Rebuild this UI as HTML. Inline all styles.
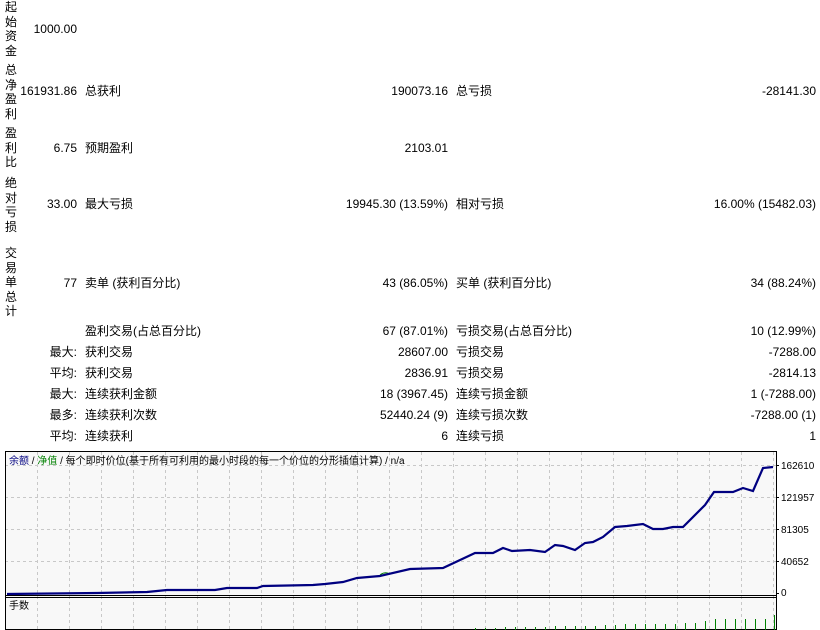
<!DOCTYPE html>
<html><head><meta charset="utf-8"><style>
body{margin:0;width:820px;height:630px;background:#fff;position:relative;overflow:hidden;font-family:"Liberation Sans","Noto Sans CJK SC",sans-serif;font-size:12px;color:#000}
.a{position:absolute;white-space:nowrap;line-height:14px}
.r{text-align:right}
.v{position:absolute;left:5px;width:14px;line-height:14.5px;font-size:12px}
</style></head><body>
<div class="v" style="top:0">起<br>始<br>资<br>金</div>
<div class="v" style="top:63px">总<br>净<br>盈<br>利</div>
<div class="v" style="top:126px">盈<br>利<br>比</div>
<div class="v" style="top:176px">绝<br>对<br>亏<br>损</div>
<div class="v" style="top:246px">交<br>易<br>单<br>总<br>计</div>

<div class="a r" style="right:743px;top:22px">1000.00</div>

<div class="a r" style="right:743px;top:84px">161931.86</div>
<div class="a" style="left:85px;top:84px">总获利</div>
<div class="a r" style="right:372px;top:84px">190073.16</div>
<div class="a" style="left:456px;top:84px">总亏损</div>
<div class="a r" style="right:4px;top:84px">-28141.30</div>

<div class="a r" style="right:743px;top:141px">6.75</div>
<div class="a" style="left:85px;top:141px">预期盈利</div>
<div class="a r" style="right:372px;top:141px">2103.01</div>

<div class="a r" style="right:743px;top:197px">33.00</div>
<div class="a" style="left:85px;top:197px">最大亏损</div>
<div class="a r" style="right:372px;top:197px">19945.30 (13.59%)</div>
<div class="a" style="left:456px;top:197px">相对亏损</div>
<div class="a r" style="right:4px;top:197px">16.00% (15482.03)</div>

<div class="a r" style="right:743px;top:276px">77</div>
<div class="a" style="left:85px;top:276px">卖单 (获利百分比)</div>
<div class="a r" style="right:372px;top:276px">43 (86.05%)</div>
<div class="a" style="left:456px;top:276px">买单 (获利百分比)</div>
<div class="a r" style="right:4px;top:276px">34 (88.24%)</div>

<div class="a" style="left:85px;top:324px">盈利交易(占总百分比)</div>
<div class="a r" style="right:372px;top:324px">67 (87.01%)</div>
<div class="a" style="left:456px;top:324px">亏损交易(占总百分比)</div>
<div class="a r" style="right:4px;top:324px">10 (12.99%)</div>

<div class="a r" style="right:743px;top:345px">最大:</div>
<div class="a" style="left:85px;top:345px">获利交易</div>
<div class="a r" style="right:372px;top:345px">28607.00</div>
<div class="a" style="left:456px;top:345px">亏损交易</div>
<div class="a r" style="right:4px;top:345px">-7288.00</div>

<div class="a r" style="right:743px;top:366px">平均:</div>
<div class="a" style="left:85px;top:366px">获利交易</div>
<div class="a r" style="right:372px;top:366px">2836.91</div>
<div class="a" style="left:456px;top:366px">亏损交易</div>
<div class="a r" style="right:4px;top:366px">-2814.13</div>

<div class="a r" style="right:743px;top:387px">最大:</div>
<div class="a" style="left:85px;top:387px">连续获利金额</div>
<div class="a r" style="right:372px;top:387px">18 (3967.45)</div>
<div class="a" style="left:456px;top:387px">连续亏损金额</div>
<div class="a r" style="right:4px;top:387px">1 (-7288.00)</div>

<div class="a r" style="right:743px;top:408px">最多:</div>
<div class="a" style="left:85px;top:408px">连续获利次数</div>
<div class="a r" style="right:372px;top:408px">52440.24 (9)</div>
<div class="a" style="left:456px;top:408px">连续亏损次数</div>
<div class="a r" style="right:4px;top:408px">-7288.00 (1)</div>

<div class="a r" style="right:743px;top:429px">平均:</div>
<div class="a" style="left:85px;top:429px">连续获利</div>
<div class="a r" style="right:372px;top:429px">6</div>
<div class="a" style="left:456px;top:429px">连续亏损</div>
<div class="a r" style="right:4px;top:429px">1</div>

<svg style="position:absolute;left:0;top:445px" width="820" height="185" viewBox="0 445 820 185">
<rect x="5" y="451" width="771" height="179" fill="#f8f8f8"/>
<g stroke="#c8c8c8" stroke-dasharray="3,3" stroke-width="1">
<line x1="5" y1="465.5" x2="776" y2="465.5"/><line x1="5" y1="497.5" x2="776" y2="497.5"/><line x1="5" y1="529.5" x2="776" y2="529.5"/><line x1="5" y1="561.5" x2="776" y2="561.5"/>
<g id="vg">
<line x1="37.5" y1="452" x2="37.5" y2="630"/><line x1="69.5" y1="452" x2="69.5" y2="630"/><line x1="101.5" y1="452" x2="101.5" y2="630"/><line x1="133.5" y1="452" x2="133.5" y2="630"/><line x1="165.5" y1="452" x2="165.5" y2="630"/><line x1="197.5" y1="452" x2="197.5" y2="630"/><line x1="229.5" y1="452" x2="229.5" y2="630"/><line x1="261.5" y1="452" x2="261.5" y2="630"/><line x1="293.5" y1="452" x2="293.5" y2="630"/><line x1="325.5" y1="452" x2="325.5" y2="630"/><line x1="357.5" y1="452" x2="357.5" y2="630"/><line x1="389.5" y1="452" x2="389.5" y2="630"/><line x1="421.5" y1="452" x2="421.5" y2="630"/><line x1="453.5" y1="452" x2="453.5" y2="630"/><line x1="485.5" y1="452" x2="485.5" y2="630"/><line x1="517.5" y1="452" x2="517.5" y2="630"/><line x1="549.5" y1="452" x2="549.5" y2="630"/><line x1="581.5" y1="452" x2="581.5" y2="630"/><line x1="613.5" y1="452" x2="613.5" y2="630"/><line x1="645.5" y1="452" x2="645.5" y2="630"/><line x1="677.5" y1="452" x2="677.5" y2="630"/><line x1="709.5" y1="452" x2="709.5" y2="630"/><line x1="741.5" y1="452" x2="741.5" y2="630"/><line x1="773.5" y1="452" x2="773.5" y2="630"/>
</g>
</g>
<rect x="5.5" y="451.5" width="771" height="178" fill="none" stroke="#000"/>
<line x1="5" y1="595.5" x2="777" y2="595.5" stroke="#000"/>
<line x1="5" y1="597.5" x2="777" y2="597.5" stroke="#000"/>
<g stroke="#000"><line x1="776" y1="465.5" x2="779" y2="465.5"/><line x1="776" y1="497.5" x2="779" y2="497.5"/><line x1="776" y1="529.5" x2="779" y2="529.5"/><line x1="776" y1="561.5" x2="779" y2="561.5"/><line x1="776" y1="593.5" x2="779" y2="593.5"/></g>
<g font-size="10" font-family="Liberation Sans, sans-serif" fill="#000">
<text x="781" y="469">162610</text><text x="781" y="501">121957</text><text x="781" y="533">81305</text><text x="781" y="565">40652</text><text x="781" y="596">0</text>
</g>
<text x="9" y="464" font-size="10" font-family="Liberation Sans, Noto Sans CJK SC, sans-serif" fill="#000"><tspan fill="#000080">余额</tspan> / <tspan fill="#008000">净值</tspan> / 每个即时价位(基于所有可利用的最小时段的每一个价位的分形插值计算) / n/a</text>
<text x="9" y="609" font-size="10" font-family="Liberation Sans, Noto Sans CJK SC, sans-serif">手数</text>
<path d="M380,575 Q385,571 390,574" stroke="#008000" fill="none"/>
<polyline fill="none" stroke="#000080" stroke-width="2.2" points="7,594 97,593 147,592 167,590 215,590 227,588 257,588 263,586 313,585 325,584 343,582 357,578 380,576 410,569 443,568 475,553 493,553 503,548 512,551 530,550 545,552 555,545 563,546 575,550 585,543 593,542 603,537 615,527 627,526 643,524 653,529 663,529 673,527 683,527 705,505 714,492 733,492 743,488 753,491 763,468 773,467"/>
<g stroke="#008000" stroke-width="1">
<line x1="475.5" y1="630" x2="475.5" y2="628"/><line x1="485.5" y1="630" x2="485.5" y2="628"/><line x1="495.5" y1="630" x2="495.5" y2="628"/><line x1="505.5" y1="630" x2="505.5" y2="627"/><line x1="515.5" y1="630" x2="515.5" y2="627"/><line x1="525.5" y1="630" x2="525.5" y2="627"/><line x1="535.5" y1="630" x2="535.5" y2="627"/><line x1="545.5" y1="630" x2="545.5" y2="627"/><line x1="555.5" y1="630" x2="555.5" y2="626"/><line x1="565.5" y1="630" x2="565.5" y2="626"/><line x1="575.5" y1="630" x2="575.5" y2="626"/><line x1="585.5" y1="630" x2="585.5" y2="626"/><line x1="595.5" y1="630" x2="595.5" y2="626"/><line x1="605.5" y1="630" x2="605.5" y2="625"/><line x1="615.5" y1="630" x2="615.5" y2="625"/><line x1="625.5" y1="630" x2="625.5" y2="624"/><line x1="635.5" y1="630" x2="635.5" y2="624"/><line x1="645.5" y1="630" x2="645.5" y2="624"/><line x1="655.5" y1="630" x2="655.5" y2="624"/><line x1="665.5" y1="630" x2="665.5" y2="624"/><line x1="675.5" y1="630" x2="675.5" y2="624"/><line x1="685.5" y1="630" x2="685.5" y2="623"/><line x1="695.5" y1="630" x2="695.5" y2="623"/><line x1="705.5" y1="630" x2="705.5" y2="621"/><line x1="715.5" y1="630" x2="715.5" y2="619"/><line x1="725.5" y1="630" x2="725.5" y2="619"/><line x1="735.5" y1="630" x2="735.5" y2="619"/><line x1="745.5" y1="630" x2="745.5" y2="619"/><line x1="755.5" y1="630" x2="755.5" y2="619"/><line x1="765.5" y1="630" x2="765.5" y2="619"/><line x1="774.5" y1="630" x2="774.5" y2="615"/>
</g>
</svg>
</body></html>
